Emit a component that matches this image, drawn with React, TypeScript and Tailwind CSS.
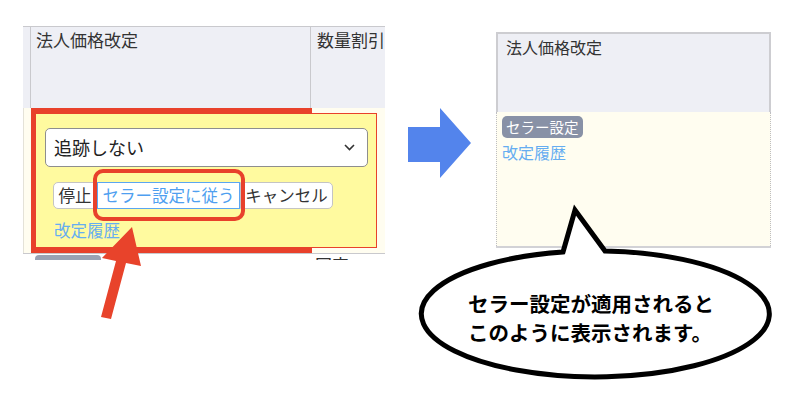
import React from 'react';

const jp = { fontFamily: '"Noto Sans CJK JP", "Noto Sans", sans-serif' };

function EditingCell() {
  return (
    <div className="w-[362px]">
      {/* Header */}
      <div className="flex h-[82px] border-t border-[#c9c9cd] bg-[#eeeff5] text-[17px] leading-[24px] text-[#333]">
        <div className="w-[8px] border-r border-[#c9c9cd]" />
        <div className="w-[280px] border-r border-[#c9c9cd] pl-[5px] pt-[1px]">法人価格改定</div>
        <div className="flex-1 overflow-hidden whitespace-nowrap pl-[6px] pt-[1px]">数量割引</div>
      </div>

      {/* Body row */}
      <div className="relative flex h-[145px] bg-[#fffdf0]">
        <div className="w-[12px] border-l border-[#e4e2d8]" />
        <div className="my-[5px] w-[342px] border border-[#e8412b] bg-[#fffa9f] pl-[9px] pt-[14px]">
          <div className="flex h-[39px] w-[323px] items-center justify-between rounded-[5px] border border-[#8e8e8e] bg-white pl-[8px] pr-[12px] text-[18px] text-[#222]">
            <span>追跡しない</span>
            <svg width="11" height="7" viewBox="0 0 11 7">
              <polyline points="1,1 5.5,5.5 10,1" fill="none" stroke="#333" strokeWidth="1.6" />
            </svg>
          </div>

          <div className="relative ml-[8px] mt-[15px] flex h-[27px] w-fit text-[16.5px] leading-none">
            <div className="flex w-[44px] items-center justify-center rounded-l-[5px] border border-[#c4c4c4] bg-white text-[#333]">停止</div>
            <div className="flex w-[143px] items-center justify-center border border-[#5aa6f2] bg-white text-[#4f9ff0]">セラー設定に従う</div>
            <div className="flex w-[93px] items-center justify-center rounded-r-[5px] border border-[#c4c4c4] bg-white text-[#333]">キャンセル</div>
            <div className="pointer-events-none absolute left-[40px] top-[-13px] h-[52px] w-[152px] rounded-[10px] border-4 border-[#e8412b]" />
          </div>

          <div className="ml-[9px] mt-[11px] text-[16.5px] leading-[20px] text-[#66adf1]">改定履歴</div>
        </div>
        <div className="pointer-events-none absolute left-[8px] top-0 h-full w-[281px] border-y-[5px] border-l-4 border-[#e8412b]" />
      </div>

      {/* Next row, cut off by the crop */}
      <div className="relative h-[7px] overflow-hidden border-t border-[#c9c9cd] bg-white">
        <div className="absolute left-[12px] top-[1px] h-[5px] w-[66px] rounded-t-[4px] bg-[#9aa2b4]" />
        <div className="absolute left-[292px] top-[1px] text-[17px] leading-[20px] text-[#333]">固定</div>
      </div>
    </div>
  );
}

function AppliedCell() {
  return (
    <div className="ml-[111px] mt-[6px] w-[275px]">
      <div className="h-[80px] border-x-2 border-t-2 border-[#cdcdd1] bg-[#eeeff5] pl-[8px] pt-[1px] text-[16px] leading-[24px] text-[#333]">
        法人価格改定
      </div>
      <div className="h-[134px] border-x border-dotted border-[#bdbdc2] bg-[#fffdf0] pl-[5px] pt-[2px]">
        <span className="inline-flex h-[22px] items-center rounded-[5px] bg-[#8891a6] px-[4px] text-[14.5px] text-white">セラー設定</span>
        <div className="mt-[4px] text-[16px] leading-[20px] text-[#66adf1]">改定履歴</div>
      </div>
      <div className="h-[2px] bg-[#d2d2d6]" />
    </div>
  );
}

export default function App() {
  return (
    <div className="relative h-[408px] w-[800px] overflow-hidden bg-white" style={jp}>
      <div className="flex items-start pl-[23px] pt-[26px]">
        <EditingCell />
        <AppliedCell />
      </div>

      {/* Annotations */}
      <svg className="pointer-events-none absolute inset-0" width="800" height="408" viewBox="0 0 800 408">
        <polygon points="132,227 141,266 126,263 111,319 101,317 116,261 102,258" fill="#e8432b" />
        <polygon points="408,127 440,127 440,108 471,143 440,178 440,162 408,162" fill="#5384ec" />
        <path
          d="M563,252 L575,210 L605,251 A174,63 0 1 1 563,252 Z"
          fill="white"
          stroke="black"
          strokeWidth="5"
          strokeLinejoin="miter"
        />
      </svg>

      <div className="absolute left-[468px] top-[289px] text-[20.5px] font-bold leading-[29px] text-black">
        <div>セラー設定が適用されると</div>
        <div>このように表示されます。</div>
      </div>
    </div>
  );
}
